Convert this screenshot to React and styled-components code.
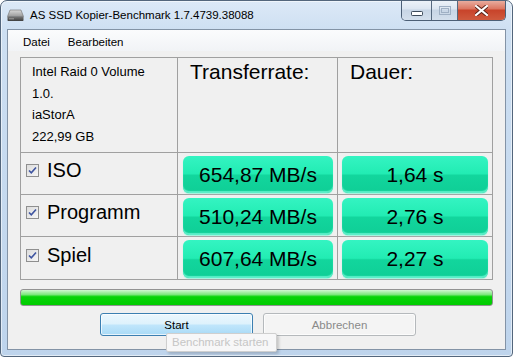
import { Fragment } from "react";
import styled, { createGlobalStyle } from "styled-components";

const GlobalStyle = createGlobalStyle`
  html, body {
    margin: 0;
    padding: 0;
    background: #ffffff;
  }
  body {
    font-family: "Liberation Sans", Arial, sans-serif;
  }
`;

const Window = styled.div`
  width: 513px;
  height: 357px;
  box-sizing: border-box;
  border: 1px solid #53667c;
  border-radius: 7px 7px 4px 4px;
  background: linear-gradient(180deg, #dce9f7 0%, #cddff2 30px, #bed4ec 100%);
  box-shadow: inset 0 0 0 1px rgba(255, 255, 255, 0.55);
  display: flex;
  flex-direction: column;
  overflow: hidden;
`;

const TitleBar = styled.div`
  height: 28px;
  flex-shrink: 0;
  display: flex;
  align-items: flex-start;
  padding-left: 6px;
`;

const TitleIcon = styled.div`
  display: flex;
  margin-top: 8px;
  margin-right: 6px;
`;

const TitleText = styled.div`
  padding-top: 7px;
  font-size: 11.5px;
  line-height: 14px;
  color: #000;
`;

const Captions = styled.div`
  margin-left: auto;
  margin-right: 6px;
  margin-top: -1px;
  display: flex;
  height: 20px;
  border: 1px solid #4c5f76;
  border-top: none;
  border-radius: 0 0 5px 5px;
  overflow: hidden;
`;

const CaptionButton = styled.div`
  width: ${(p) => p.$w}px;
  display: flex;
  align-items: center;
  justify-content: center;
  box-sizing: border-box;
  border-left: ${(p) => (p.$first ? "none" : "1px solid #56697f")};
  background: ${(p) =>
    p.$close
      ? "linear-gradient(180deg, #eab3a6 0%, #dc7560 45%, #c8432a 50%, #cf5a3e 100%)"
      : "linear-gradient(180deg, #eef3f9 0%, #dce6f1 45%, #c7d5e5 50%, #d3dfec 100%)"};
`;

const MenuBar = styled.div`
  height: 21px;
  flex-shrink: 0;
  display: flex;
  padding-left: 6px;
  background: linear-gradient(180deg, #fbfcfd 0%, #f1f3f6 100%);
`;

const MenuItem = styled.div`
  padding: 5px 9px 0;
  font-size: 11.5px;
  line-height: 14px;
  color: #000;
`;

const Client = styled.div`
  flex: 1;
  margin: 0 6px 6px;
  border: 1px solid #8393a6;
  background: #f0f0f0;
  display: flex;
  flex-direction: column;
`;

const Content = styled.div`
  padding: 6px 12px 0;
  display: flex;
  flex-direction: column;
`;

const Table = styled.div`
  display: grid;
  grid-template-columns: 156px 159px 154px;
  grid-template-rows: 94px 41px 41px 42px;
  gap: 1px;
  border: 1px solid #a0a0a0;
  background: #a0a0a0;
`;

const Cell = styled.div`
  background: #f0f0f0;
  display: flex;
  box-sizing: border-box;
`;

const InfoCell = styled(Cell)`
  flex-direction: column;
  padding: 3px 0 0 11px;
  font-size: 13px;
  line-height: 21.5px;
  color: #000;
`;

const HeadCell = styled(Cell)`
  padding: 1px 0 0 12px;
  font-size: 21px;
  line-height: 26px;
  color: #000;
`;

const NameCell = styled(Cell)`
  align-items: center;
  padding: 0 0 6px 5px;
  font-size: 20px;
  color: #000;
`;

const CheckBox = styled.span`
  width: 13px;
  height: 13px;
  box-sizing: border-box;
  border: 1px solid #8f8f8f;
  background: linear-gradient(135deg, #dcdcdc 0%, #f6f6f6 100%);
  display: flex;
  align-items: center;
  justify-content: center;
  margin-right: 8px;
  flex-shrink: 0;
`;

const ValueCell = styled(Cell)`
  padding: 3px 4px 1px ${(p) => (p.$left ? 5 : 4)}px;
`;

const ValueBox = styled.div`
  flex: 1;
  display: flex;
  align-items: center;
  justify-content: center;
  border-radius: 6px;
  font-size: 21px;
  color: #000;
  background: linear-gradient(
    180deg,
    #34f4c2 0%,
    #22ecb3 48%,
    #12d69d 52%,
    #0fce96 100%
  );
  box-shadow: inset 0 -2px 1px #5cefc9, 0 1px 1px #9ff3dd;
`;

const Progress = styled.div`
  margin-top: 9px;
  height: 17px;
  box-sizing: border-box;
  border: 1px solid #929292;
  border-radius: 3px;
  background: linear-gradient(
    180deg,
    #d3f7d3 0%,
    #7ee87e 30%,
    #08d408 45%,
    #00cc00 100%
  );
`;

const Buttons = styled.div`
  margin-top: 7px;
  display: flex;
  gap: 10px;
  padding-left: 80px;
`;

const ButtonWrap = styled.div`
  position: relative;
`;

const Button = styled.div`
  width: 153px;
  height: 23px;
  box-sizing: border-box;
  border-radius: 3px;
  display: flex;
  align-items: center;
  justify-content: center;
  font-size: 11.5px;
  color: ${(p) => (p.$disabled ? "#8a8a8a" : "#000")};
  border: 1px solid ${(p) => (p.$disabled ? "#b5b9bc" : "#3c7fb1")};
  background: ${(p) =>
    p.$disabled
      ? "#f4f4f4"
      : "linear-gradient(180deg, #ecf7fd 0%, #ddf2fc 48%, #c0e6fb 52%, #a9daf6 100%)"};
  box-shadow: inset 0 0 0 1px rgba(255, 255, 255, 0.7);
`;

const Tooltip = styled.div`
  position: absolute;
  left: 66px;
  top: 20px;
  z-index: 2;
  width: 111px;
  height: 19px;
  box-sizing: border-box;
  border: 1px solid #cfcfcf;
  border-radius: 2px;
  background: #f7f7f8;
  box-shadow: 2px 2px 3px rgba(0, 0, 0, 0.18);
  padding-left: 5px;
  font-size: 11.5px;
  line-height: 17px;
  color: #c6c6c6;
  white-space: nowrap;
`;

const DriveIcon = () => (
  <svg width="17" height="13" viewBox="0 0 17 13">
    <defs>
      <linearGradient id="hdTop" x1="0" y1="0" x2="0" y2="1">
        <stop offset="0" stopColor="#d8d8d8" />
        <stop offset="1" stopColor="#9a9a9a" />
      </linearGradient>
      <linearGradient id="hdFront" x1="0" y1="0" x2="0" y2="1">
        <stop offset="0" stopColor="#7a7a7a" />
        <stop offset="1" stopColor="#3e3e3e" />
      </linearGradient>
    </defs>
    <path d="M3 1h11l2.5 6.5H0.5z" fill="url(#hdTop)" stroke="#6d6d6d" strokeWidth="0.6" />
    <rect x="0.5" y="7.5" width="16" height="4.5" rx="0.8" fill="url(#hdFront)" />
    <rect x="2" y="9.3" width="5" height="1" fill="#9c9c9c" />
  </svg>
);

const MinGlyph = () => (
  <svg width="12" height="6" viewBox="0 0 12 6" style={{ marginTop: 7 }}>
    <rect x="0.5" y="0.5" width="11" height="4" rx="0.8" fill="#ffffff" stroke="#3c4a5a" />
  </svg>
);

const MaxGlyph = () => (
  <svg width="12" height="9" viewBox="0 0 12 9">
    <rect x="0.5" y="0.5" width="11" height="8" fill="none" stroke="#9fb0c4" />
    <rect x="2.5" y="2.5" width="7" height="4" fill="none" stroke="#9fb0c4" />
  </svg>
);

const CloseGlyph = () => (
  <svg width="13" height="11" viewBox="0 0 13 11">
    <path
      d="M1 1l11 9M12 1L1 10"
      stroke="#5b2318"
      strokeWidth="4"
      strokeLinecap="square"
      fill="none"
    />
    <path
      d="M1 1l11 9M12 1L1 10"
      stroke="#ffffff"
      strokeWidth="2.2"
      strokeLinecap="square"
      fill="none"
    />
  </svg>
);

const CheckMark = () => (
  <svg width="9" height="9" viewBox="0 0 9 9">
    <path d="M1 4.5l2.3 2.4L8 1.5" stroke="#3e54a0" strokeWidth="1.6" fill="none" />
  </svg>
);

const results = [
  { name: "ISO", rate: "654,87 MB/s", time: "1,64 s" },
  { name: "Programm", rate: "510,24 MB/s", time: "2,76 s" },
  { name: "Spiel", rate: "607,64 MB/s", time: "2,27 s" },
];

const App = () => {
  return (
    <>
      <GlobalStyle />
      <Window>
        <TitleBar>
          <TitleIcon>
            <DriveIcon />
          </TitleIcon>
          <TitleText>AS SSD Kopier-Benchmark 1.7.4739.38088</TitleText>
          <Captions>
            <CaptionButton $w={29} $first>
              <MinGlyph />
            </CaptionButton>
            <CaptionButton $w={26}>
              <MaxGlyph />
            </CaptionButton>
            <CaptionButton $w={48} $close>
              <CloseGlyph />
            </CaptionButton>
          </Captions>
        </TitleBar>
        <Client>
          <MenuBar>
            <MenuItem>Datei</MenuItem>
            <MenuItem>Bearbeiten</MenuItem>
          </MenuBar>
          <Content>
            <Table>
              <InfoCell>
                <span>Intel Raid 0 Volume</span>
                <span>1.0.</span>
                <span>iaStorA</span>
                <span>222,99 GB</span>
              </InfoCell>
              <HeadCell>Transferrate:</HeadCell>
              <HeadCell>Dauer:</HeadCell>
              {results.map((r) => (
                <Fragment key={r.name}>
                  <NameCell>
                    <CheckBox>
                      <CheckMark />
                    </CheckBox>
                    {r.name}
                  </NameCell>
                  <ValueCell $left>
                    <ValueBox>{r.rate}</ValueBox>
                  </ValueCell>
                  <ValueCell>
                    <ValueBox>{r.time}</ValueBox>
                  </ValueCell>
                </Fragment>
              ))}
            </Table>
            <Progress />
            <Buttons>
              <ButtonWrap>
                <Button>Start</Button>
                <Tooltip>Benchmark starten</Tooltip>
              </ButtonWrap>
              <Button $disabled>Abbrechen</Button>
            </Buttons>
          </Content>
        </Client>
      </Window>
    </>
  );
};

export default App;
